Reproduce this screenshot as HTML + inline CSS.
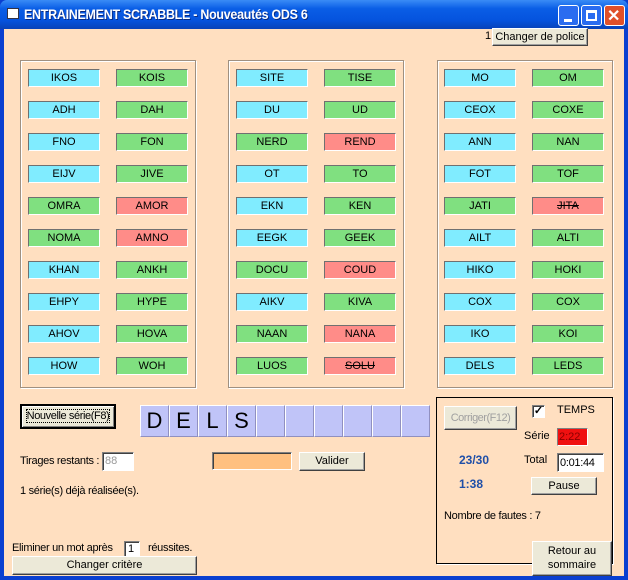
<!DOCTYPE html>
<html><head><meta charset="utf-8"><style>
*{box-sizing:border-box;margin:0;padding:0}
body{width:628px;height:580px;overflow:hidden;background:#0a3fd0;font-family:"Liberation Sans",sans-serif;font-size:11px;color:#000;position:relative;white-space:nowrap}
.a{position:absolute}
#title{left:0;top:0;width:628px;height:29px;background:linear-gradient(#3a8cf6,#0a5ee6 30%,#0553de 70%,#0842b8);border-radius:7px 7px 0 0}
#title .t{left:24px;top:6px;color:#fff;font-weight:bold;font-size:14px;letter-spacing:-0.3px;text-shadow:1px 1px #0a2a80;transform:scaleX(.89);transform-origin:left}
.wb{top:5px;width:21px;height:21px;border:1px solid #fff;border-radius:3px;background:#2a6cf0}
#client{left:4px;top:29px;width:620px;height:547px;background:#ffdfc0}
.panel{border:1px solid #a09080;box-shadow:inset 1px 1px #fff,1px 1px #fff}
.w{width:72px;height:18px;border:1px solid;border-color:#707070 #fff #fff #707070;text-align:center;line-height:16px;font-size:11px}
.c{background:#80ecff}.g{background:#80e080}.r{background:#ff8c88}
.s{text-decoration:line-through}
.btn{background:#ece9d8;border:1px solid;border-color:#fff #404040 #404040 #fff;box-shadow:inset -1px -1px #a0a0a0;text-align:center;font-size:11px}
.tile{width:29px;height:32px;background:#c0c4f8;border:1px solid;border-color:#fff #9090c0 #9090c0 #fff;font-size:22px;text-align:center;line-height:30px}
.inp{background:#fff;border:1px solid;border-color:#808080 #fff #fff #808080;box-shadow:inset 1px 1px #404040}
.blue{color:#1f4fa8;font-weight:bold;font-size:12px}
</style></head><body>
<div id="title" class="a">
<div class="a" style="left:7px;top:8px;width:12px;height:11px;background:#fff;border:1px solid #334"></div>
<div class="a t">ENTRAINEMENT SCRABBLE - Nouveautés ODS 6</div>
<div class="a wb" style="left:558px"><div class="a" style="left:5px;top:13px;width:8px;height:3px;background:#fff"></div></div>
<div class="a wb" style="left:581px"><div class="a" style="left:4px;top:4px;width:11px;height:11px;border:2px solid #fff;border-top-width:3px"></div></div>
<div class="a wb" style="left:604px;background:#e0502a;width:21px"><div class="a" style="left:2px;top:0;color:#fff;font-weight:bold;font-size:16px">✕</div></div>
</div>
<div id="client" class="a"></div>
<div class="a" style="left:485px;top:30px">1</div>
<div class="a btn" style="left:492px;top:28px;width:96px;height:18px;line-height:16px">Changer de police</div>

<div class="a panel" style="left:20px;top:60px;width:176px;height:328px"></div>
<div class="a panel" style="left:228px;top:60px;width:176px;height:328px"></div>
<div class="a panel" style="left:437px;top:60px;width:176px;height:328px"></div>

<div id="words"></div>
<script>
var P=[[28,116,[["IKOS","c","KOIS","g"],["ADH","c","DAH","g"],["FNO","c","FON","g"],["EIJV","c","JIVE","g"],["OMRA","g","AMOR","r"],["NOMA","g","AMNO","r"],["KHAN","c","ANKH","g"],["EHPY","c","HYPE","g"],["AHOV","c","HOVA","g"],["HOW","c","WOH","g"]]],
[236,324,[["SITE","c","TISE","g"],["DU","c","UD","g"],["NERD","g","REND","r"],["OT","c","TO","g"],["EKN","c","KEN","g"],["EEGK","c","GEEK","g"],["DOCU","g","COUD","r"],["AIKV","c","KIVA","g"],["NAAN","g","NANA","r"],["LUOS","g","SOLU","r s"]]],
[444,532,[["MO","c","OM","g"],["CEOX","c","COXE","g"],["ANN","c","NAN","g"],["FOT","c","TOF","g"],["JATI","g","JITA","r s"],["AILT","c","ALTI","g"],["HIKO","c","HOKI","g"],["COX","c","COX","g"],["IKO","c","KOI","g"],["DELS","c","LEDS","g"]]]];
var h="";P.forEach(function(p){p[2].forEach(function(r,i){var y=69+i*32;
h+='<div class="a w '+r[1]+'" style="left:'+p[0]+'px;top:'+y+'px">'+r[0]+'</div>';
h+='<div class="a w '+r[3]+'" style="left:'+p[1]+'px;top:'+y+'px">'+r[2]+'</div>';});});
document.getElementById("words").innerHTML=h;
</script>

<div class="a btn" style="left:20px;top:404px;width:96px;height:25px;line-height:21px;border:2px solid #000;box-shadow:inset 1px 1px #fff,inset -1px -1px #808080;letter-spacing:-0.4px"><span style="outline:1px dotted #000">Nouvelle série(F8)</span></div>
<div class="a" style="left:140px;top:405px;display:flex">
<div class="tile">D</div><div class="tile">E</div><div class="tile">L</div><div class="tile">S</div><div class="tile"></div><div class="tile"></div><div class="tile"></div><div class="tile"></div><div class="tile"></div><div class="tile"></div></div>

<div class="a" style="left:20px;top:455px;letter-spacing:-0.3px">Tirages restants :</div>
<div class="a inp" style="left:102px;top:452px;width:32px;height:19px;color:#999;padding:2px 2px">88</div>
<div class="a inp" style="left:212px;top:452px;width:80px;height:18px;background:#ffc080"></div>
<div class="a btn" style="left:299px;top:452px;width:66px;height:19px;line-height:17px">Valider</div>
<div class="a" style="left:20px;top:485px;letter-spacing:-0.3px">1 série(s) déjà réalisée(s).</div>

<div class="a" style="left:436px;top:397px;width:177px;height:167px;border:1px solid #000;box-shadow:1px 1px #fff"></div>
<div class="a btn" style="left:444px;top:406px;width:73px;height:24px;line-height:22px;color:#a0a0a0;letter-spacing:-0.5px">Corriger(F12)</div>
<div class="a inp" style="left:532px;top:405px;width:13px;height:13px;font-size:11px;line-height:11px;text-align:center;font-weight:bold">✓</div>
<div class="a" style="left:557px;top:404px">TEMPS</div>
<div class="a" style="left:524px;top:430px">Série</div>
<div class="a" style="left:557px;top:428px;width:31px;height:18px;background:#f01010;border:1px solid;border-color:#808080 #fff #fff #808080;color:#800;padding:2px 1px">2:22</div>
<div class="a blue" style="left:459px;top:453px">23/30</div>
<div class="a" style="left:524px;top:454px">Total</div>
<div class="a inp" style="left:557px;top:453px;width:47px;height:19px;padding:3px 2px;letter-spacing:-0.3px">0:01:44</div>
<div class="a blue" style="left:459px;top:477px">1:38</div>
<div class="a btn" style="left:531px;top:477px;width:66px;height:18px;line-height:16px">Pause</div>
<div class="a" style="left:444px;top:510px;letter-spacing:-0.3px">Nombre de fautes :  7</div>

<div class="a" style="left:12px;top:542px;letter-spacing:-0.3px">Eliminer un mot après</div>
<div class="a inp" style="left:124px;top:541px;width:16px;height:16px;padding:1px 3px">1</div>
<div class="a" style="left:148px;top:542px;letter-spacing:-0.3px">réussites.</div>
<div class="a btn" style="left:12px;top:556px;width:185px;height:19px;line-height:17px">Changer critère</div>
<div class="a btn" style="left:532px;top:541px;width:80px;height:35px;line-height:14px;padding-top:2px">Retour au<br>sommaire</div>
</body></html>
